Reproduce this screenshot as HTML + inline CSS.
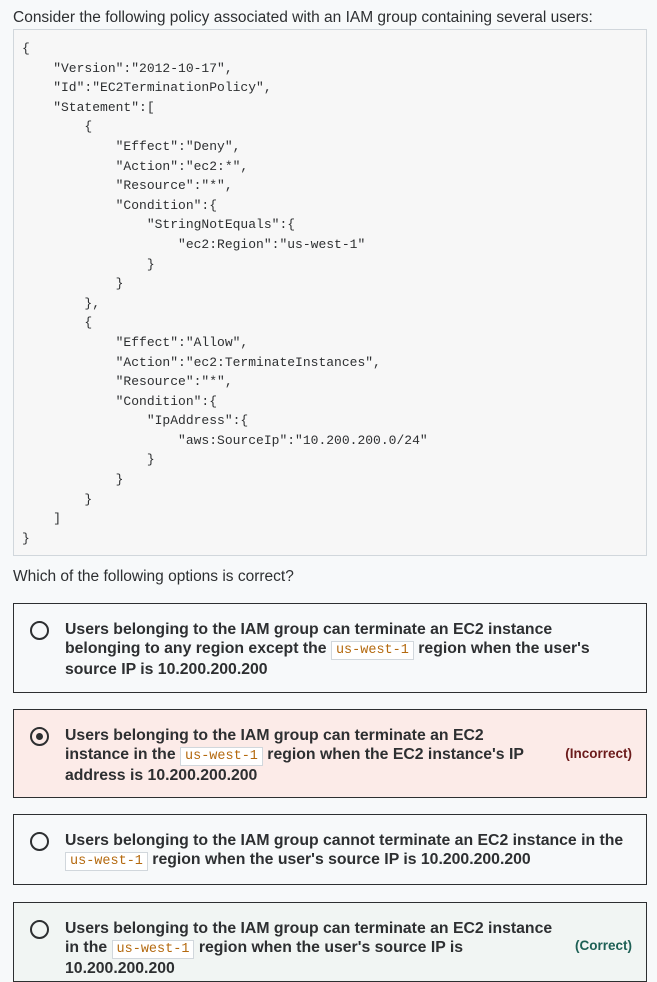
<!DOCTYPE html>
<html><head><meta charset="utf-8"><style>
body{margin:0;background:#f7f9fa;width:657px;height:969px;overflow:hidden;font-family:"Liberation Sans",sans-serif;color:#2d2f31;position:relative}
.t{position:absolute;font-size:15px;white-space:nowrap}
pre{position:absolute;left:13px;top:29px;width:634px;height:527px;margin:0;background:#f7f7f7;border:1px solid #d1d7dc;font-family:"Liberation Mono",monospace;font-size:13px;line-height:19.6px;padding:9px 0 0 8px;box-sizing:border-box;color:#2d2f31}
.box{position:absolute;left:13px;width:634px;border:1px solid #2d2f31;box-sizing:border-box;background:#f7f9fa}
.r{position:absolute;left:16px;width:19px;height:19px;border:2px solid #2d2f31;border-radius:50%;box-sizing:border-box}
.r.on::after{content:"";position:absolute;left:4px;top:4px;width:7px;height:7px;border-radius:50%;background:#2d2f31}
.l{position:absolute;left:51px;font-weight:bold;font-size:15.8px;line-height:19px;white-space:nowrap}
code{font-family:"Liberation Mono",monospace;font-size:13.5px;font-weight:normal;color:#b4690e;background:#fff;border:1px solid #d1d7dc;padding:1px 4px}
.tag{position:absolute;right:14px;font-weight:bold;font-size:13.5px}
</style></head><body>
<div class="t" style="left:13px;top:9px;font-size:15.5px">Consider the following policy associated with an IAM group containing several users:</div>
<pre>{
    "Version":"2012-10-17",
    "Id":"EC2TerminationPolicy",
    "Statement":[
        {
            "Effect":"Deny",
            "Action":"ec2:*",
            "Resource":"*",
            "Condition":{
                "StringNotEquals":{
                    "ec2:Region":"us-west-1"
                }
            }
        },
        {
            "Effect":"Allow",
            "Action":"ec2:TerminateInstances",
            "Resource":"*",
            "Condition":{
                "IpAddress":{
                    "aws:SourceIp":"10.200.200.0/24"
                }
            }
        }
    ]
}</pre>
<div class="t" style="left:13px;top:568px;font-size:15.5px">Which of the following options is correct?</div>

<div class="box" style="top:603px;height:90px">
<div class="r" style="top:17px"></div>
<div class="l" style="top:16px">Users belonging to the IAM group can terminate an EC2 instance<br>belonging to any region except the <code>us-west-1</code> region when the user's<br>source IP is 10.200.200.200</div>
</div>

<div class="box" style="top:709px;height:89px;background:#fcebe8">
<div class="r on" style="top:17px"></div>
<div class="l" style="top:16px">Users belonging to the IAM group can terminate an EC2<br>instance in the <code>us-west-1</code> region when the EC2 instance's IP<br>address is 10.200.200.200</div>
<div class="tag" style="top:36px;color:#6b1b1b">(Incorrect)</div>
</div>

<div class="box" style="top:814px;height:71px">
<div class="r" style="top:17px"></div>
<div class="l" style="top:16px">Users belonging to the IAM group cannot terminate an EC2 instance in the<br><code>us-west-1</code> region when the user's source IP is 10.200.200.200</div>
</div>

<div class="box" style="top:902px;height:80px;background:#f1f5f3">
<div class="r" style="top:17px"></div>
<div class="l" style="top:16px">Users belonging to the IAM group can terminate an EC2 instance<br>in the <code>us-west-1</code> region when the user's source IP is<br>10.200.200.200</div>
<div class="tag" style="top:35px;color:#1e6055">(Correct)</div>
</div>
</body></html>
